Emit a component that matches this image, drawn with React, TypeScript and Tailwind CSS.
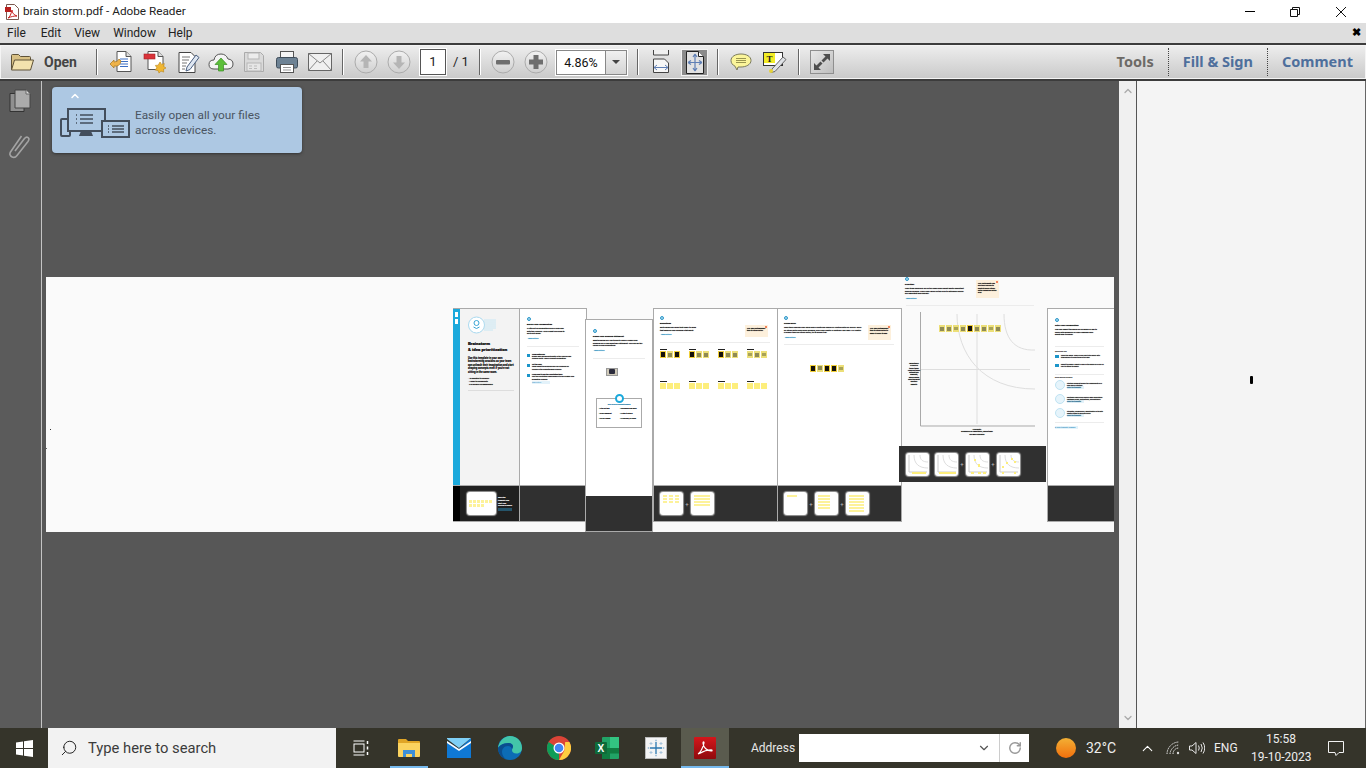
import { ChevronDown, ChevronUp, RotateCw, Search } from "lucide-react";

const ui = "font-['Roboto',sans-serif]";

function Sep() {
  return <div className="w-[2px] h-[26px] bg-[#666] border-r border-white ml-[6px] mr-[5px] shrink-0" />;
}

function Tool({ children, w = "w-[33px]" }: { children: React.ReactNode; w?: string }) {
  return <div className={`${w} h-[26px] flex items-center justify-center shrink-0`}>{children}</div>;
}

function RoundBtn({ kind }: { kind: "up" | "down" | "minus" | "plus" }) {
  const fill = kind === "up" || kind === "down" ? "#b5b5b5" : "#6e6e6e";
  return (
    <svg width="24" height="24" viewBox="0 0 24 24">
      <defs>
        <linearGradient id={`rb-${kind}`} x1="0" y1="0" x2="0" y2="1">
          <stop offset="0" stopColor="#f2f2f2" />
          <stop offset="1" stopColor="#cfcfcf" />
        </linearGradient>
      </defs>
      <circle cx="12" cy="12" r="11" fill={`url(#rb-${kind})`} stroke="#ababab" />
      {kind === "up" && <path d="M12 5l6 6.500h-3.500V18h-5v-6.500H6z" fill={fill} />}
      {kind === "down" && <path d="M12 19l6-6.500h-3.500V6h-5v6.500H6z" fill={fill} />}
      {kind === "minus" && <rect x="5" y="10" width="14" height="4.500" rx="1" fill={fill} />}
      {kind === "plus" && <path d="M9.500 5h5v4.500H19v5h-4.500V19h-5v-4.500H5v-5h4.500z" fill={fill} />}
    </svg>
  );
}

function Toolbar() {
  return (
    <div className="h-[38px] shrink-0 border-y-2 border-[#3c3c3c] bg-[linear-gradient(#eeeeee,#c9c9c9)] flex items-center pl-[10px] shadow-[inset_0_0_0_1px_#f4f4f4]">
      <svg width="25" height="20" viewBox="0 0 25 20" className="shrink-0">
        <path d="M1.500 17V3.500q0-1 1-1h6l2 2h9q1 0 1 1V8" fill="#d8c084" stroke="#5e5238" />
        <path d="M1.500 18L4.500 8h19l-3 10z" fill="#f3e2ae" stroke="#5e5238" />
      </svg>
      <span className="ml-[9px] w-[46px] text-[14px] font-bold text-[#444]">Open</span>
      <Sep />
      <div className="w-[2px]" />
      <Tool>
        <svg width="24" height="24" viewBox="0 0 24 24">
          <path d="M7 1.500h9l5 5v15H7z" fill="#fff" stroke="#555" />
          <path d="M16 1.500v5h5" fill="#ddd" stroke="#555" />
          <path d="M10 9h8M10 11.500h8M10 14h8M10 16.500h8" stroke="#3c6fc4" />
          <path d="M1 15q1-6 7-5v-2l4 4-4 4v-2q-4 0-5 3z" transform="rotate(180 6 13)" fill="#efb34a" stroke="#a87720" strokeWidth=".7" />
        </svg>
      </Tool>
      <Tool>
        <svg width="24" height="24" viewBox="0 0 24 24">
          <path d="M5 1.500h10l5 5v13H5z" fill="#fff" stroke="#555" />
          <path d="M15 1.500v5h5" fill="#ddd" stroke="#555" />
          <rect x="1" y="4" width="11" height="5" fill="#d9333a" stroke="#a32229" strokeWidth=".6" />
          <path d="M17 12l1.600 2.400 2.700-.8-.6 2.800 2.300 1.600-2.500 1.300.2 2.800-2.700-1-2 2-1-2.700-2.800-.3 1.600-2.300-1.400-2.400 2.800-.2z" fill="#f0b632" stroke="#b98518" strokeWidth=".6" />
        </svg>
      </Tool>
      <Tool>
        <svg width="24" height="24" viewBox="0 0 24 24">
          <path d="M3 2.500h12l4 4v16H3z" fill="#fff" stroke="#444" />
          <path d="M6 7h8M6 10h7M6 13h5M6 16h4M6 19h3" stroke="#777" />
          <path d="M11 17L20 5l3 2.500-9 12-4 1.500z" fill="#dfe7f2" stroke="#4a5f80" />
        </svg>
      </Tool>
      <Tool>
        <svg width="26" height="24" viewBox="0 0 26 24">
          <path d="M6 19q-5 0-5-4.500T6 10q1-6 7-6 5 0 7 5 5 .5 5 5t-5 5z" fill="#f4f4f4" stroke="#555" />
          <path d="M13 8l6 6.500h-3.500V21h-5v-6.500H7z" fill="#5cbf3a" stroke="#3a8c25" strokeWidth=".7" />
        </svg>
      </Tool>
      <Tool>
        <svg width="22" height="22" viewBox="0 0 22 22">
          <path d="M1.500 1.500h16l3 3v16h-19z" fill="#dadada" stroke="#aaa" />
          <rect x="5" y="2" width="11" height="6" fill="#ececec" stroke="#b5b5b5" />
          <rect x="4" y="12" width="14" height="8" fill="#e6e6e6" stroke="#b5b5b5" />
          <path d="M6 15h3M11 15h3M6 17.500h3M11 17.500h3" stroke="#bbb" />
        </svg>
      </Tool>
      <Tool>
        <svg width="24" height="24" viewBox="0 0 24 24">
          <rect x="5.500" y="1.500" width="13" height="7" fill="#f5f5f5" stroke="#555" />
          <path d="M3.500 7.500h17q2 0 2 2v7q0 1.500-2 1.500h-17q-2 0-2-1.500v-7q0-2 2-2z" fill="#6d8294" stroke="#3f4d5a" />
          <rect x="5.500" y="14.500" width="13" height="8" fill="#fff" stroke="#555" />
          <path d="M8 17.500h8M8 20h8" stroke="#999" />
        </svg>
      </Tool>
      <Tool>
        <svg width="24" height="18" viewBox="0 0 24 18">
          <rect x=".5" y=".5" width="23" height="17" fill="#f0f0f0" stroke="#666" />
          <path d="M.5.500L12 10 23.500.5M.5 17.500L9 8M23.500 17.500L15 8" fill="none" stroke="#888" />
        </svg>
      </Tool>
      <Sep />
      <Tool><RoundBtn kind="up" /></Tool>
      <Tool><RoundBtn kind="down" /></Tool>
      <div className="ml-[5px] w-[26px] h-[26px] shrink-0 bg-white border border-[#555] shadow-[0_0_0_1px_#fff] flex items-center justify-center text-[13px] text-[#222]">1</div>
      <span className="ml-[7px] w-[20px] shrink-0 text-[13px] text-[#222] whitespace-nowrap">/ 1</span>
      <Sep />
      <Tool><RoundBtn kind="minus" /></Tool>
      <Tool><RoundBtn kind="plus" /></Tool>
      <div className="ml-[4px] w-[71px] h-[25px] shrink-0 bg-white border border-[#888] shadow-[0_0_0_1px_#fff] flex">
        <span className="w-[48px] text-center text-[12.500px] leading-[24px] text-[#111]">4.86%</span>
        <div className="flex-1 border-l border-[#888] bg-[linear-gradient(#f0f0f0,#d4d4d4)] flex items-center justify-center">
          <div className="w-0 h-0 border-x-[4px] border-x-transparent border-t-[4px] border-t-[#444]" />
        </div>
      </div>
      <div className="w-[4px]" />
      <Sep />
      <div className="w-[3px]" />
      <Tool w="w-[27px]">
        <svg width="18" height="24" viewBox="0 0 18 24">
          <path d="M1.500 0v5h15V0" fill="#f0f0f0" stroke="#444" />
          <path d="M1.500 22.500V9h11l4 4v9.500z" fill="#f6f6f6" stroke="#444" />
          <path d="M2 17.500h14M2 17.500l3-2.500M2 17.500l3 2.500M16 17.500l-3-2.500M16 17.500l-3 2.500" stroke="#5f7fb5" fill="none" />
        </svg>
      </Tool>
      <div className="ml-[7px] w-[27px] h-[27px] bg-[#8b8b8b] border border-[#f2f2f2] flex items-center justify-center shrink-0">
        <svg width="18" height="23" viewBox="0 0 18 23">
          <path d="M.5.500h12l5 5v17H.5z" fill="#e2e2e2" stroke="#222" />
          <path d="M12.500.5v5h5" fill="#fff" stroke="#222" />
          <path d="M9 3v17M2 11.500h14M9 3L7 6M9 3l2 3M9 20l-2-3M9 20l2-3M2 11.500L5 9.500M2 11.500l3 2M16 11.500l-3-2M16 11.500l-3 2" stroke="#5f7fb5" strokeWidth="1.200" fill="none" />
        </svg>
      </div>
      <div className="w-[3px]" />
      <Sep />
      <Tool>
        <svg width="22" height="18" viewBox="0 0 22 18">
          <path d="M11 1c5.500 0 10 2.500 10 6.500S16 14 11 14c-1 0-2 0-3 0l-1 3-2-3.800C2.500 12 1 10 1 7.500 1 3.500 5.500 1 11 1z" fill="#fbf59a" stroke="#7b7b5c" />
          <path d="M6 5.500h10M6 7.500h10M6 9.500h10" stroke="#9a9650" />
        </svg>
      </Tool>
      <Tool w="w-[35px]">
        <svg width="24" height="22" viewBox="0 0 24 22">
          <rect x=".5" y="1.500" width="19" height="13" fill="#fff" stroke="#333" />
          <rect x="1" y="2" width="11" height="10" fill="#f2ec25" />
          <text x="3.500" y="10.500" fontSize="9" fontWeight="700" fontFamily="Liberation Serif, serif" fill="#222">T</text>
          <path d="M9 18L20 6l3 2.500-11 12-4 1z" fill="#dfe2e6" stroke="#666" />
          <circle cx="8" cy="20" r="2" fill="#e6d23a" />
        </svg>
      </Tool>
      <Sep />
      <div className="ml-[5px] w-[24px] h-[24px] border border-[#8f8f8f] bg-[linear-gradient(135deg,#e8e8e8,#bdbdbd)] flex items-center justify-center shrink-0">
        <svg width="20" height="20" viewBox="0 0 20 20">
          <path d="M11 2h7v7l-2.500-2.500L11.500 10.500 9.500 8.500l4-4z" fill="#4e4e4e" />
          <path d="M9 18H2v-7l2.500 2.500 4-4 2 2-4 4z" fill="#4e4e4e" />
        </svg>
      </div>
      <div className="flex-1" />
      <span className="font-['Noto_Sans',sans-serif] text-[14.500px] font-bold text-[#6d6a66]">Tools</span>
      <div className="h-[28px] mx-[14px] border-l border-dotted border-[#444]" />
      <span className="font-['Noto_Sans',sans-serif] text-[14.500px] font-bold text-[#4e6f9c]">Fill &amp; Sign</span>
      <div className="h-[28px] mx-[14px] border-l border-dotted border-[#444]" />
      <span className="font-['Noto_Sans',sans-serif] text-[14.500px] font-bold text-[#4e6f9c] mr-[13px]">Comment</span>
    </div>
  );
}

function Promo() {
  return (
    <div className="absolute left-[52px] top-[87px] w-[250px] h-[66px] rounded-[4px] bg-[#adc8e3] shadow-[0_1px_3px_#333] flex items-end pl-[8px] pb-[15px]">
      <ChevronUp size={12} strokeWidth={3} className="absolute left-[17px] top-[3px] text-white" />
      <svg width="70" height="30" viewBox="0 0 70 30" className="shrink-0">
        <g fill="#adc8e3" stroke="#434e5c" strokeWidth="2">
          <rect x="1" y="11" width="9" height="17" rx="1" />
          <rect x="8" y="1" width="37" height="22" />
          <rect x="42" y="13" width="27" height="16" />
        </g>
        <path d="M21 23h10l2 5H19z" fill="#434e5c" />
        <path d="M16 7h1M20 7h13M16 11h1M20 11h13M16 15h1M20 15h13M48 18h1M52 18h12M48 21h1M52 21h12M48 24h1M52 24h12" stroke="#434e5c" strokeWidth="1.300" />
      </svg>
      <p className="ml-[5px] text-[11.800px] leading-[15px] text-[#4a5562]">
        Easily open all your files
        <br />
        across devices.
      </p>
    </div>
  );
}

function Logo() {
  return <div className="w-[4px] h-[4px] rounded-full border border-[#2c97c9] bg-[#a9d8ee]" />;
}

function Head({ title, body, link = "Open article" }: { title: string; body: string; link?: string }) {
  return (
    <>
      <Logo />
      <p className="mt-[2px] text-[2.200px] leading-[3px] font-black text-black whitespace-nowrap [text-shadow:0_0_.7px_#000]">{title}</p>
      <p className="mt-[1px] text-[2px] leading-[2.500px] font-bold text-black [text-shadow:0_0_.7px_#000]">{body}</p>
      <p className="mt-[2px] text-[1.900px] leading-[3px] font-bold text-[#1c87ba] [text-shadow:0_0_.7px_#1c87ba]">◦ {link}</p>
    </>
  );
}

function Rule() {
  return <div className="h-px bg-[#ececec]" />;
}

function Sticky({ dark = 0 }: { dark?: number }) {
  if (dark === 1) {
    return (
      <div className="w-[6px] h-[7px] bg-[#f0cf3a] flex items-center justify-center">
        <div className="w-[4px] h-[5px] bg-[#15110a]" />
      </div>
    );
  }
  if (dark === 2 || dark === 3) {
    return (
      <div className="w-[6px] h-[7px] bg-[#ecdf78] flex items-center justify-center">
        <div className={dark === 2 ? "w-[4px] h-[4px] bg-[#8f8a55]" : "w-[4px] h-[3px] bg-[#a8a258]"} />
      </div>
    );
  }
  return <div className="w-[6px] h-[6px] bg-[#fdee7c]" />;
}

function StickyGroup({ marks }: { marks: number[] }) {
  return (
    <div className="w-[22px]">
      <div className="w-[7px] h-px bg-[#222] mb-px" />
      <div className="flex gap-px">
        {marks.map((m, i) => (
          <Sticky key={i} dark={m} />
        ))}
      </div>
    </div>
  );
}

function Thumb({ size = "w-[23px] h-[23px]", children }: { size?: string; children?: React.ReactNode }) {
  return (
    <div className={`${size} bg-white rounded-[3px] shadow-[0_0_1px_1px_#999] p-[3px] shrink-0 flex flex-col gap-px overflow-hidden`}>
      {children}
    </div>
  );
}

function Bits({ rows, w = "w-[14px]" }: { rows: number; w?: string }) {
  return (
    <>
      {Array.from({ length: rows }).map((_, i) => (
        <div key={i} className={`${w} h-[2px] bg-[#fdf29a]`} />
      ))}
    </>
  );
}

function ChartThumb({ spots }: { spots: string }) {
  return (
    <div className="w-[23px] h-[23px] bg-white rounded-[3px] shadow-[0_0_1px_1px_#999] shrink-0 overflow-hidden">
      <svg width="23" height="23" viewBox="0 0 23 23">
        <path d="M3 2v17h18" fill="none" stroke="#ccc" />
        <path d="M8 2c0 9 5 13 14 13M14 2c0 5 3 7 8 7" fill="none" stroke="#ddd" />
        <path d={spots} stroke="#fdee7c" strokeWidth="2" />
      </svg>
    </div>
  );
}

function Plus() {
  return <span className="w-[4px] text-center text-[6px] leading-none text-[#bbb]">+</span>;
}

function Callout({ cls, lines }: { cls: string; lines: string }) {
  return (
    <div className={`absolute ${cls} bg-[#fdf0dc] p-[2px] text-[1.800px] leading-[2.300px] font-black text-black overflow-hidden [text-shadow:0_0_.7px_#000]`}>
      <div className="absolute right-[1px] top-[1px] w-[2px] h-[2px] bg-[#f2845c]" />
      {lines}
    </div>
  );
}

function PdfPage() {
  return (
    <div className="relative ml-[4px] w-[1068px] h-[255px] bg-[#fafafa] overflow-hidden shrink-0">
      <div className="absolute left-[4px] top-[152px] w-px h-px bg-[#333]" />
      <div className="absolute left-[0px] top-[171px] w-px h-px bg-[#666]" />

      {/* page 1 */}
      <div className="absolute left-[407px] top-[31px] w-[67px] h-[214px] border border-[#aaa] border-l-0 flex flex-col">
        <div className="flex-1 flex bg-[#f3f3f3]">
          <div className="w-[7px] bg-[#1ba9dc] flex flex-col items-center gap-[2px] pt-[3px]">
            <div className="w-[3px] h-[5px] bg-white" />
            <div className="w-[3px] h-[5px] bg-white" />
          </div>
          <div className="flex-1 pl-[8px] pr-[5px] pt-[7px]">
            <svg width="28" height="18" viewBox="0 0 28 18">
              <circle cx="8.500" cy="9" r="8" fill="#fff" stroke="#a9d9ef" />
              <circle cx="8.500" cy="7" r="2.500" fill="none" stroke="#3aa5d5" />
              <path d="M5.500 11q3 3 6 0" fill="none" stroke="#3aa5d5" />
              <path d="M16 4h12M16 6h12M16 8h12M16 10h12M16 12h12M16 14h9" stroke="#bde3f4" strokeWidth=".8" />
            </svg>
            <p className="mt-[7px] text-[4.400px] leading-[6px] font-black text-[#222] whitespace-nowrap [text-shadow:0_0_.5px_#333]">
              Brainstorm
              <br />
              &amp; idea prioritization
            </p>
            <p className="mt-[4px] text-[2.600px] leading-[3.400px] font-bold text-[#222] [text-shadow:0_0_.5px_#333]">
              Use this template in your own brainstorming sessions so your team can unleash their imagination and start shaping concepts even if you're not sitting in the same room.
            </p>
            <div className="mt-[3px] text-[2px] leading-[3.200px] font-black text-[#111] [text-shadow:0_0_.7px_#000]">
              <p>◦ 10 minutes to prepare</p>
              <p>◦ 1 hour to collaborate</p>
              <p>◦ 2-8 people recommended</p>
            </div>
            <div className="mt-[3px] h-px bg-[#ddd]" />
          </div>
        </div>
        <div className="h-[36px] shrink-0 flex bg-[#202020] border-t border-[#aaa]">
          <div className="w-[7px] bg-black" />
          <div className="flex items-center pl-[7px] gap-[2px]">
            <div className="w-[29px] h-[23px] bg-white rounded-[3px] shadow-[0_0_1px_1px_#999] p-[2px] flex flex-wrap gap-px content-center">
              {Array.from({ length: 10 }).map((_, i) => (
                <div key={i} className="w-[3px] h-[3px] bg-[#fdf29a]" />
              ))}
            </div>
            <div className="w-[14px] text-[1.900px] leading-[2.600px] font-bold text-white [text-shadow:0_0_.5px_#fff]">
              Open the template and start your session in Mural
              <div className="h-[3px] bg-[#25546a] mt-px" />
            </div>
          </div>
        </div>
      </div>

      {/* page 2 */}
      <div className="absolute left-[473px] top-[31px] w-[68px] h-[214px] border border-[#aaa] bg-white flex flex-col">
        <div className="flex-1 px-[7px] pt-[8px]">
          <div className="w-[38px]">
            <Head title="Before your collaboration" body="A little bit of preparation goes a long way with this session. Here's what you need to do to get going." />
          </div>
          <div className="mt-[6px]"><Rule /></div>
          <div className="mt-[6px] flex flex-col gap-[3px]">
            {[
              ["Team gathering", "Define who should participate in the session and send an invite. Share relevant information."],
              ["Set the goal", "Think about the problem you'll be focusing on solving in the brainstorming session."],
              ["Learn how to use the facilitation tools", "Use the Facilitation Superpowers to run a happy and productive session."],
            ].map(([t, d], i) => (
              <div key={i} className="flex gap-[2px]">
                <div className="mt-[1px] w-[3px] h-[3px] bg-[#1c95c9] shrink-0" />
                <div className="w-[42px] text-[1.800px] leading-[2.400px] font-bold text-black [text-shadow:0_0_.7px_#000]">
                  <b>{t}</b>
                  <p>{d}</p>
                </div>
              </div>
            ))}
          </div>
          <div className="ml-[5px] mt-[1px] w-[18px] h-[3px] bg-[#e3f2fa] text-[1.700px] leading-[3px] text-[#1c87ba]">Open article</div>
        </div>
        <div className="h-[36px] shrink-0 bg-[#303030] border-t border-[#aaa]" />
      </div>

      {/* page 3 */}
      <div className="absolute left-[539px] top-[42px] w-[68px] h-[213px] border border-[#aaa] bg-white flex flex-col">
        <div className="relative flex-1 px-[7px] pt-[9px]">
          <div className="w-[50px]">
            <Head title="Define your problem statement" body="What problem are you trying to solve? Frame your problem as a How Might We statement. This will be the focus of your brainstorm." />
          </div>
          <div className="mt-[6px]"><Rule /></div>
          <div className="mt-[9px] ml-[13px] w-[12px] h-[8px] border border-[#999] bg-[#cfc9b8] flex items-center justify-center">
            <div className="w-[6px] h-[5px] bg-[#2c2c3c] rounded-[1px]" />
          </div>
          <div className="absolute left-[10px] top-[78px] w-[46px] h-[30px] border border-[#aaa] bg-white px-[2px] pt-[4px]">
            <div className="absolute left-[18px] top-[-5px] w-[9px] h-[9px] rounded-full border-2 border-[#1ba9dc] bg-white" />
            <p className="text-center text-[1.900px] leading-[2.200px] font-bold text-[#1877a5] [text-shadow:0_0_.6px_#1877a5]">Key rules of brainstorming</p>
            <div className="mt-[2px] grid grid-cols-2 gap-x-[2px] gap-y-[2px] text-[1.600px] leading-[3px] font-bold text-black whitespace-nowrap [text-shadow:0_0_.6px_#000]">
              <p><span className="text-[#8fcde9]">■</span> Stay on topic</p>
              <p><span className="text-[#8fcde9]">■</span> Encourage wild ideas</p>
              <p><span className="text-[#8fcde9]">■</span> Defer judgment</p>
              <p><span className="text-[#8fcde9]">■</span> Listen to others</p>
              <p><span className="text-[#8fcde9]">■</span> Go for volume</p>
              <p><span className="text-[#8fcde9]">■</span> If possible, be visual</p>
            </div>
          </div>
        </div>
        <div className="h-[35px] shrink-0 bg-[#303030]" />
      </div>

      {/* page 4 */}
      <div className="absolute left-[607px] top-[31px] w-[125px] h-[214px] border border-[#aaa] bg-white flex flex-col">
        <div className="flex-1 px-[6px] pt-[7px]">
          <div className="w-[38px]">
            <Head title="Brainstorm" body="Write down any ideas that come to mind that address your problem statement." />
          </div>
          <div className="mt-[6px] mr-[1px]"><Rule /></div>
          <div className="mt-[6px] flex gap-[7px]">
            <StickyGroup marks={[1, 2, 1]} />
            <StickyGroup marks={[1, 2, 2]} />
            <StickyGroup marks={[1, 2, 2]} />
            <StickyGroup marks={[3, 2, 3]} />
          </div>
          <div className="mt-[23px] flex gap-[7px]">
            <StickyGroup marks={[0, 0, 0]} />
            <StickyGroup marks={[0, 0, 0]} />
            <StickyGroup marks={[0, 0, 0]} />
            <StickyGroup marks={[0, 0, 0]} />
          </div>
        </div>
        <div className="h-[36px] shrink-0 bg-[#303030] border-t border-[#aaa] flex items-center pl-[6px] gap-[2px]">
          <Thumb><div className="grid grid-cols-3 gap-px"><Bits rows={9} w="w-[4px]" /></div></Thumb>
          <Plus />
          <Thumb><Bits rows={4} w="w-[16px]" /></Thumb>
        </div>
      </div>

      {/* page 5 */}
      <div className="absolute left-[731px] top-[31px] w-[125px] h-[214px] border border-[#aaa] bg-white flex flex-col">
        <div className="flex-1 px-[6px] pt-[7px]">
          <div className="w-[78px]">
            <Head title="Group ideas" body="Take turns sharing your ideas while clustering similar or related notes as you go. Once all sticky notes have been grouped, give each cluster a sentence-like label. If a cluster is bigger than six sticky notes, try to break it up." />
          </div>
          <div className="mt-[5px] mr-[1px]"><Rule /></div>
          <div className="mt-[20px] ml-[26px] flex gap-px">
            <Sticky dark={1} />
            <Sticky dark={2} />
            <Sticky dark={1} />
            <Sticky dark={1} />
            <Sticky dark={3} />
          </div>
        </div>
        <div className="h-[36px] shrink-0 bg-[#303030] border-t border-[#aaa] flex items-center pl-[6px] gap-[2px]">
          <Thumb><Bits rows={1} w="w-[10px]" /></Thumb>
          <Plus />
          <Thumb><Bits rows={5} w="w-[12px]" /></Thumb>
          <Plus />
          <Thumb><Bits rows={6} w="w-[15px]" /></Thumb>
        </div>
      </div>

      <Callout cls="left-[699px] top-[48px] w-[23px] h-[12px]" lines="Tip: Add customizable tags to sticky notes" />
      <Callout cls="left-[822px] top-[48px] w-[23px] h-[15px]" lines="Tip: Add customizable tags to sticky notes to make it easier to find" />

      {/* page 6: prioritize */}
      <div className="absolute left-[859px] top-[0px] w-[60px] h-[27px]">
        <Head title="Prioritize" body="Your team should all be on the same page about what's important moving forward. Place your ideas on this grid to determine which are important and feasible." />
      </div>
      <div className="absolute left-[860px] top-[28px] w-[128px]"><Rule /></div>
      <Callout cls="left-[930px] top-[3px] w-[23px] h-[18px]" lines="Tip: Participants can use their cursors to point at where sticky notes should go on the grid." />
      <svg width="125" height="126" viewBox="0 0 125 126" className="absolute left-[868px] top-[32px]">
        <path d="M43 5c0 40 25 75 78 75M90 5c0 24 10 37 31 36M63 5v110M6 60.500h110" fill="none" stroke="#dedede" />
        <path d="M6.500 3v114H121" fill="none" stroke="#a9a9a9" />
      </svg>
      <div className="absolute left-[893px] top-[48px] flex gap-px">
        {[2, 2, 3, 2, 1, 2, 2, 3, 2].map((m, i) => (
          <Sticky key={i} dark={m} />
        ))}
      </div>
      <div className="absolute left-[862px] top-[85px] w-[12px] text-center text-[1.800px] leading-[2.300px] font-black text-black [text-shadow:0_0_.7px_#000]">
        Importance
        <p>If each of these tasks could get done without any difficulty, which would have the most positive impact?</p>
      </div>
      <div className="absolute left-[914px] top-[151px] w-[34px] text-center text-[1.800px] leading-[2.300px] font-black text-black [text-shadow:0_0_.7px_#000]">
        Feasibility
        <p>Regardless of importance, which tasks are more feasible?</p>
      </div>
      <div className="absolute left-[853px] top-[169px] w-[147px] h-[36px] bg-[#303030] flex items-center pl-[7px] gap-[2px]">
        <ChartThumb spots="M6 20h14" />
        <div className="w-[2px]" />
        <ChartThumb spots="M4 20h17" />
        <Plus />
        <ChartThumb spots="M5 20h3M12 20h3M17 20h3M9 6v2M13 11v3" />
        <Plus />
        <ChartThumb spots="M5 14h2M9 10h2M14 6h2M17 9h2M5 20h2M17 20h2" />
      </div>

      {/* page 7 */}
      <div className="absolute left-[1001px] top-[31px] w-[68px] h-[214px] border border-[#aaa] bg-white flex flex-col">
        <div className="flex-1 pl-[7px] pr-[10px] pt-[9px]">
          <Logo />
          <p className="mt-[2px] text-[2.200px] leading-[3px] font-black text-black [text-shadow:0_0_.7px_#000]">After your collaboration</p>
          <p className="mt-[1px] w-[42px] text-[2px] leading-[2.500px] font-bold text-black [text-shadow:0_0_.7px_#000]">You can export the mural as an image or pdf to share with members of your company who might find it helpful.</p>
          <div className="mt-[10px]"><Rule /></div>
          <p className="mt-[3px] text-[1.800px] leading-[3px] font-bold text-[#444] [text-shadow:0_0_.5px_#444]">Quick add-ons</p>
          <div className="mt-[1px] flex flex-col gap-[5px]">
            <div className="flex gap-[2px]">
              <div className="w-[4px] h-[3px] mt-px bg-[#1c95c9] shrink-0" />
              <p className="text-[1.700px] leading-[2.200px] font-bold text-black [text-shadow:0_0_.7px_#000]">Share the mural. Share a view link to the mural with stakeholders to keep them in the loop.</p>
            </div>
            <div className="flex gap-[2px]">
              <div className="w-[4px] h-[3px] mt-px bg-[#1c95c9] shrink-0" />
              <p className="text-[1.700px] leading-[2.200px] font-bold text-black [text-shadow:0_0_.7px_#000]">Export the mural. Export a copy of the mural as a PNG or PDF to attach to emails.</p>
            </div>
          </div>
          <div className="mt-[7px]"><Rule /></div>
          <p className="mt-[1px] text-[1.800px] leading-[3px] font-bold text-[#444] [text-shadow:0_0_.5px_#444]">Keep moving forward</p>
          <div className="mt-[1px] flex flex-col gap-[4px]">
            {["Strategy blueprint Define the components of a new idea or strategy.", "Customer experience journey map Understand customer needs, motivations, and obstacles.", "Strengths, weaknesses, opportunities & threats Identify them to develop a plan."].map((t) => (
              <div key={t} className="flex gap-[2px] items-center">
                <div className="w-[10px] h-[10px] rounded-full border border-[#bfe3f3] bg-[#e6f4fb] shrink-0" />
                <div className="text-[1.700px] leading-[2.200px] font-bold text-black [text-shadow:0_0_.7px_#000]">
                  {t}
                  <div className="w-[17px] h-[3px] bg-[#e3f2fa] text-[#1c87ba]">Open the template</div>
                </div>
              </div>
            ))}
          </div>
          <div className="mt-[4px]"><Rule /></div>
          <div className="mt-[3px] w-[23px] h-[3px] bg-[#e3f2fa] text-[1.700px] leading-[3px] font-bold text-[#1c87ba]">■ Share template feedback</div>
        </div>
        <div className="h-[36px] shrink-0 bg-[#303030] border-t border-[#aaa]" />
      </div>
    </div>
  );
}

function Taskbar() {
  return (
    <div className="h-[40px] shrink-0 bg-[#35342a] flex items-stretch text-white">
      <div className="w-[48px] flex items-center justify-center shrink-0">
        <svg width="17" height="17" viewBox="0 0 17 17" fill="#fff">
          <path d="M0 2.400l7-1V8H0zM8 1.300L17 0v8H8zM0 9h7v6.600l-7-1zM8 9h9v8l-9-1.300z" />
        </svg>
      </div>
      <div className="w-[288px] bg-[#f2f2f2] flex items-center pl-[12px] shrink-0">
        <Search size={18} strokeWidth={1.300} className="text-[#222] -scale-x-100" />
        <span className="ml-[10px] text-[14.750px] text-[#3b3b3b]">Type here to search</span>
      </div>
      <div className="w-[49px] flex items-center justify-center shrink-0">
        <svg width="16" height="16" viewBox="0 0 16 16" fill="none" stroke="#fff">
          <path d="M.5 1h11M.5 15h11" />
          <rect x="1" y="4" width="10" height="8" />
          <path d="M14.500 1v3M14.500 6.500v3M14.500 12v3" strokeWidth="1.500" />
        </svg>
      </div>
      <div className="w-[48px] flex items-center justify-center relative shrink-0">
        <svg width="22" height="18" viewBox="0 0 22 18">
          <path d="M0 1q0-1 1-1h7l2 2h11q1 0 1 1v3H0z" fill="#e0a526" />
          <path d="M0 4h22v13q0 1-1 1H1q-1 0-1-1z" fill="#fbd35f" />
          <path d="M5 18v-7h12v7h-3v-3H8v3z" fill="#3d8fd8" />
        </svg>
        <div className="absolute bottom-0 left-[5px] right-[5px] h-[2px] bg-[#76b9ed]" />
      </div>
      <div className="w-[52px] flex items-center justify-center shrink-0">
        <svg width="24" height="20" viewBox="0 0 24 20">
          <path d="M0 3l12 8L24 0v20H0z" fill="#0f78d4" />
          <path d="M0 0h24L12 10 0 1z" fill="#7fd0f7" />
          <path d="M0 3l12 8 12-8v2L12 13 0 5z" fill="#fff" />
        </svg>
      </div>
      <div className="w-[49px] flex items-center justify-center shrink-0">
        <svg width="24" height="24" viewBox="0 0 24 24">
          <circle cx="12" cy="12" r="12" fill="#0c6cb5" />
          <path d="M24 12c0 3-2 5.500-5.500 5.500-3 0-4.500-1.500-4.500-3.500 0-1.500 1-2.500 1-3.500 0-2-2-3.500-4.500-3.500C5 7 1 10 0 12 1 5 6 0 12 0c7 0 12 5 12 12z" fill="#43c6a9" />
          <path d="M0 12c1-2 5-5 10.500-5 2.500 0 4.500 1.500 4.500 3.500 0 1-1 2-1 3.500 0-2.500-2-4-4-4-4 0-6 3-6 6 0 3 2 6 4 7C3.500 22 0 17 0 12z" fill="#0a4e8f" />
        </svg>
      </div>
      <div className="w-[49px] flex items-center justify-center shrink-0">
        <svg width="24" height="24" viewBox="0 0 24 24">
          <circle cx="12" cy="12" r="12" fill="#db4437" />
          <path d="M12 24A12 12 0 0 1 1.600 6L7 9.500 12 18z" fill="#0f9d58" />
          <path d="M12 24l5.200-9 1-9h4.200A12 12 0 0 1 12 24z" fill="#ffcd40" />
          <circle cx="12" cy="12" r="5.500" fill="#fff" />
          <circle cx="12" cy="12" r="4.300" fill="#4285f4" />
        </svg>
      </div>
      <div className="w-[48px] flex items-center justify-center shrink-0">
        <svg width="24" height="22" viewBox="0 0 24 22">
          <rect x="7" y="0" width="17" height="22" rx="1" fill="#21a366" />
          <rect x="15" y="0" width="9" height="11" fill="#33c481" />
          <rect x="7" y="11" width="8" height="11" fill="#107c41" />
          <rect x="15" y="11" width="9" height="5.500" fill="#107c41" />
          <rect x="0" y="5" width="12" height="12" rx="1" fill="#0f6b3a" />
          <text x="2.500" y="14.500" fontSize="10" fontWeight="700" fontFamily="Liberation Sans, sans-serif" fill="#fff">X</text>
        </svg>
      </div>
      <div className="w-[50px] flex items-center justify-center shrink-0">
        <svg width="22" height="22" viewBox="0 0 22 22">
          <rect x=".5" y=".5" width="21" height="21" fill="#f4f4f4" stroke="#bbb" />
          <path d="M11 5v12M5 11h12" stroke="#2b78b0" strokeWidth="1.300" />
          <path d="M6 5v3M4.500 6.500h3M16 5v3M14.500 6.500h3M6 14v3M4.500 15.500h3M16 14v3M14.500 15.500h3M11 2.500v2M10 3.500h2M11 17.500v2M10 18.500h2M2.500 11h2M3.500 10v2M17.500 11h2M18.500 10v2" stroke="#a7c4dc" />
        </svg>
      </div>
      <div className="w-[48px] bg-[#5a5b4e] flex items-center justify-center relative shrink-0">
        <div className="w-[22px] h-[22px] bg-[linear-gradient(#d4161b,#8f0a0d)] rounded-[1px] flex items-center justify-center">
          <svg width="16" height="16" viewBox="0 0 16 16" fill="none" stroke="#fff" strokeWidth="1.200">
            <path d="M1 14c2-1 5-6 6-11 .2-1.500-1-1.500-1 0 0 4 4 8 8 8 1.500 0 1.500-1.200 0-1.200-3 0-8 1.500-11 3.500z" />
          </svg>
        </div>
        <div className="absolute bottom-0 inset-x-0 h-[2px] bg-[#76b9ed]" />
      </div>
      <span className="ml-[22px] w-[48px] self-center text-[12px] text-[#e6e6e6] shrink-0">Address</span>
      <div className="my-[6px] w-[230px] bg-white flex items-center justify-end shrink-0">
        <ChevronDown size={14} className="text-[#555] mr-[8px]" />
        <div className="w-[30px] h-full border-l border-[#ccc] flex items-center justify-center">
          <RotateCw size={14} strokeWidth={2.500} className="text-[#999]" />
        </div>
      </div>
      <div className="ml-[27px] self-center w-[20px] h-[20px] rounded-full bg-[linear-gradient(#f2b035,#f26f0c)] shrink-0" />
      <span className="ml-[10px] w-[29px] self-center text-[14px] text-[#eee] shrink-0 whitespace-nowrap">32°C</span>
      <ChevronUp size={17} strokeWidth={1.500} className="ml-[24px] self-center shrink-0" />
      <svg width="14" height="14" viewBox="0 0 14 14" fill="none" stroke="#ddd" className="ml-[10px] self-center shrink-0">
        <path d="M1 13C1 7 6 1 13 1M4 13c0-4 4-9 9-9M7 13c0-3 2-6 6-6" strokeDasharray="1.500 .8" />
        <circle cx="12" cy="12" r="1.200" fill="#ddd" stroke="none" />
      </svg>
      <svg width="16" height="14" viewBox="0 0 16 14" fill="none" stroke="#e6e6e6" className="ml-[9px] self-center shrink-0">
        <path d="M.5 5v4h2.500l4 3.500v-11L3 5zM9.500 4.500q1.500 2.500 0 5M12 3q2.500 4 0 8M14 1.500q3.500 5.500 0 11" />
      </svg>
      <span className="ml-[9px] w-[24px] self-center text-[12px] text-[#eee] shrink-0">ENG</span>
      <div className="ml-[13px] w-[60px] self-center text-center text-[12px] leading-[18px] text-[#eee] shrink-0 whitespace-nowrap">
        <p>15:58</p>
        <p>19-10-2023</p>
      </div>
      <svg width="16" height="16" viewBox="0 0 16 16" fill="none" stroke="#f2f2f2" className="ml-[17px] self-center shrink-0">
        <path d="M.5 1.500h15v11h-4.500l-3 3-1-3H.5z" />
      </svg>
    </div>
  );
}

export default function App() {
  return (
    <div className={`${ui} relative w-[1366px] h-[768px] overflow-hidden flex flex-col bg-white`}>
      <div className="h-[23px] shrink-0 bg-white flex items-center">
        <svg width="14" height="16" viewBox="0 0 14 16" className="ml-[5px] shrink-0">
          <path d="M1.500.5h8l4 4v11h-12z" fill="#fff" stroke="#7a5a50" />
          <rect x="0" y="3" width="6" height="5" fill="#b8201e" />
          <path d="M3 14c2-1 3-4 4-8 0 3 2 5 5 6-3 0-6 .5-9 2z" fill="none" stroke="#c8201e" />
        </svg>
        <span className="ml-[4px] text-[11.750px] text-[#222]">brain storm.pdf - Adobe Reader</span>
        <div className="flex-1" />
        <div className="w-[10px] h-px bg-black mr-[35px]" />
        <svg width="10" height="10" viewBox="0 0 10 10" fill="none" stroke="#111" className="mr-[36px]">
          <path d="M2.500 2.500V.5h7v7h-2M.5 2.500h7v7h-7z" />
        </svg>
        <svg width="10" height="10" viewBox="0 0 10 10" stroke="#111" className="mr-[20px]">
          <path d="M0 0l10 10M10 0L0 10" />
        </svg>
      </div>
      <div className="h-[20px] shrink-0 bg-[#dedede] flex items-center text-[12px] text-[#222] relative">
        <span className="ml-[7px]">File</span>
        <span className="ml-[15px]">Edit</span>
        <span className="ml-[13px]">View</span>
        <span className="ml-[13px]">Window</span>
        <span className="ml-[12px]">Help</span>
        <span className="absolute right-[5px] top-[2px] text-[11px] font-bold text-black">✖</span>
      </div>
      <Toolbar />
      <div className="flex-1 min-h-0 flex">
        <div className="w-[42px] shrink-0 bg-[#5b5b5b] border-r border-[#c4c4c4] flex flex-col items-center pt-[8px] gap-[20px]">
          <svg width="22" height="24" viewBox="0 0 22 24" className="mr-px">
            <path d="M1 4.500h14v18H1z" fill="#8f8f8f" stroke="#333" />
            <path d="M6 1h11l4 4v14H6z" fill="#ababab" stroke="#444" />
            <path d="M17 1v4h4" fill="#ddd" stroke="#666" />
          </svg>
          <svg width="22" height="26" viewBox="0 0 22 26" fill="none" stroke="#a3a3a3" strokeWidth="1.600" className="mr-[4px]">
            <path d="M7 17L16.500 4.500c2.500-3 6-.5 3.500 3L9 21.500c-3 4-9 .5-6.500-3.500L13.500 2" transform="translate(0 1)" />
          </svg>
        </div>
        <div className="flex-1 bg-[#575757] flex items-center min-w-0">
          <PdfPage />
        </div>
        <div className="w-[18px] shrink-0 bg-[#f0f0f0] border-r border-[#555] flex flex-col items-center justify-between py-[4px] text-[#aaa]">
          <ChevronUp size={12} strokeWidth={2.500} />
          <ChevronDown size={12} strokeWidth={2.500} />
        </div>
        <div className="w-[229px] shrink-0 bg-[#f4f4f4] border-r border-[#666] relative">
          <div className="absolute left-[113px] top-[295px] w-[3px] h-[8px] bg-black rounded-[1px]" />
        </div>
      </div>
      <Taskbar />
      <Promo />
    </div>
  );
}
